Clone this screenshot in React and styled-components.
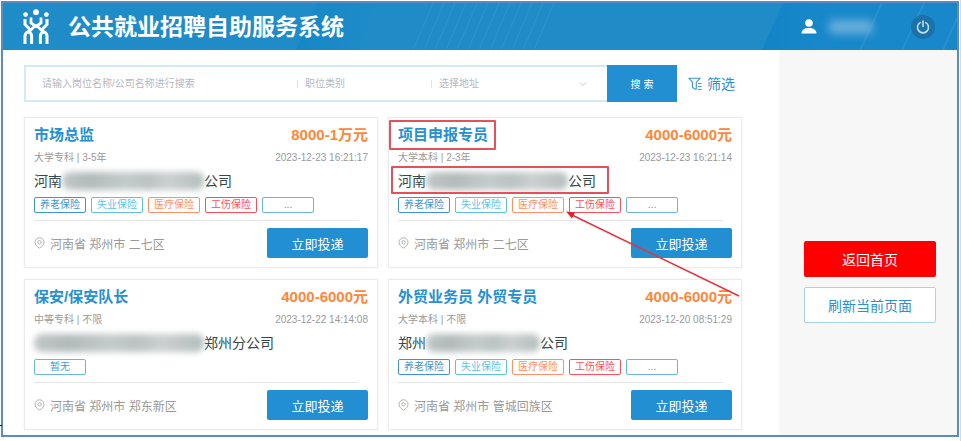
import styled, { createGlobalStyle } from 'styled-components';

const jobs = [
  {
    title: '市场总监',
    salary: '8000-1万元',
    meta: '大学专科 | 3-5年',
    date: '2023-12-23 16:21:17',
    company: ['河南', '公司'],
    hidden: 142,
    tags: ['养老保险', '失业保险', '医疗保险', '工伤保险', '...'],
    place: '河南省 郑州市 二七区',
  },
  {
    title: '项目申报专员',
    salary: '4000-6000元',
    meta: '大学本科 | 2-3年',
    date: '2023-12-23 16:21:14',
    company: ['河南', '公司'],
    hidden: 142,
    tags: ['养老保险', '失业保险', '医疗保险', '工伤保险', '...'],
    place: '河南省 郑州市 二七区',
    marked: true,
  },
  {
    title: '保安/保安队长',
    salary: '4000-6000元',
    meta: '中等专科 | 不限',
    date: '2023-12-22 14:14:08',
    company: ['', '郑州分公司'],
    hidden: 170,
    tags: ['暂无'],
    place: '河南省 郑州市 郑东新区',
  },
  {
    title: '外贸业务员 外贸专员',
    salary: '4000-6000元',
    meta: '大学本科 | 不限',
    date: '2023-12-20 08:51:29',
    company: ['郑州', '公司'],
    hidden: 114,
    tags: ['养老保险', '失业保险', '医疗保险', '工伤保险', '...'],
    place: '河南省 郑州市 管城回族区',
  },
];

const tagColors = {
  养老保险: '#3f93cf',
  失业保险: '#5fbfe6',
  医疗保险: '#ff8f66',
  工伤保险: '#ff4d5a',
};

const Logo = () => (
  <svg width="26" height="38" viewBox="0 0 26 38" fill="none" stroke="#fff" strokeWidth="3" aria-hidden="true">
    <g fill="#fff" stroke="none">
      <circle cx="2.6" cy="6.6" r="2.4" />
      <circle cx="13" cy="4.2" r="2.9" />
      <circle cx="23.4" cy="6.6" r="2.4" />
    </g>
    <path d="M2 11v5.5l6.5 6.500M24 11v5.500L17.500 23" />
    <path d="M8 9.500V15l5 3.500 5-3.500V9.500" strokeWidth="2.800" />
    <path d="M13 17l-8.500 8M13 17l8.500 8" strokeWidth="2.600" />
    <path d="M2 36v-8q0-3 3.400-4.500Q8.600 25 8.600 28v8" />
    <path d="M17.400 36v-8q0-3 3.200-4.500Q24 25 24 28v8" />
  </svg>
);

const PinIcon = () => (
  <svg width="11" height="12" viewBox="0 0 11 12" fill="none" stroke="#a8a8a8" strokeWidth="0.9" aria-hidden="true">
    <path d="M5.5 11C2.8 9.600 1 7.800 1 5.300a4.500 4.500 0 0 1 9 0c0 2.500-1.800 4.300-4.500 5.700z" />
    <circle cx="5.5" cy="5.3" r="1.7" />
  </svg>
);

const FilterIcon = () => (
  <svg width="14" height="14" viewBox="0 0 14 14" fill="none" stroke="#3d97d1" strokeWidth="1.1" aria-hidden="true">
    <path d="M7.800 12.500L4.500 10.500v-5L1 1.200h11L8.300 5.500v7" />
    <path d="M10 6.500h3.500M10 9.500h3.500M10 12.500h3.500" />
  </svg>
);

const UserIcon = () => (
  <svg width="16" height="16" viewBox="0 0 16 16" fill="#fff" aria-hidden="true">
    <circle cx="8" cy="4" r="3.800" />
    <path d="M0.500 14.500c0-3.500 3-5.500 7.500-5.500s7.500 2 7.500 5.500z" />
  </svg>
);

const PowerIcon = () => (
  <svg width="14" height="14" viewBox="0 0 14 14" fill="none" stroke="#c5dfee" strokeWidth="1.6" strokeLinecap="round" aria-hidden="true">
    <path d="M4.200 2.600a5.500 5.500 0 1 0 5.600 0M7 1v5.500" />
  </svg>
);

const HeaderArt = () => (
  <Art viewBox="0 0 954 47" preserveAspectRatio="none" aria-hidden="true">
    <defs>
      <linearGradient id="shade">
        <stop offset="0" stopColor="#0f83c4" stopOpacity="0.6" />
        <stop offset="1" stopColor="#0f83c4" stopOpacity="0" />
      </linearGradient>
    </defs>
    <path d="M293 47L314 0h60l-21 47z" fill="url(#shade)" />
    <path d="M759 47L780 0h174v47z" fill="#1486cb" opacity="0.6" />
    <path d="M759 47L780 0h50l-21 47z" fill="url(#shade)" />
    <g stroke="#fff" strokeOpacity="0.07">
      {Array.from({ length: 12 }, (_, i) => (
        <path key={i} d={`M${410 + i * 11} 47l20-47`} />
      ))}
      <path d="M857 47l22-47M899 47l22-47M940 47l14-32" strokeWidth="2" />
    </g>
  </Art>
);

const JobCard = ({ job }) => (
  <Card>
    <Line>
      <Title>
        {job.title}
        {job.marked && <TitleMark />}
      </Title>
      <Salary>{job.salary}</Salary>
    </Line>
    <MetaLine>
      <span>{job.meta}</span>
      <time>{job.date}</time>
    </MetaLine>
    <Company>
      {job.company[0]}
      <Censored $width={job.hidden} />
      {job.company[1]}
      {job.marked && <CompanyMark />}
    </Company>
    <Tags>
      {job.tags.map((tag) => (
        <Tag key={tag} $color={tagColors[tag]}>{tag}</Tag>
      ))}
    </Tags>
    <Divider />
    <Line>
      <Place>
        <PinIcon />
        {job.place}
      </Place>
      <Apply type="button">立即投递</Apply>
    </Line>
  </Card>
);

export default function App() {
  return (
    <Page>
      <GlobalStyle />
      <Frame>
        <Header>
          <HeaderArt />
          <Logo />
          <h1>公共就业招聘自助服务系统</h1>
          <UserIcon />
          <UserName />
          <Power type="button" aria-label="退出">
            <PowerIcon />
          </Power>
        </Header>
        <Body>
          <Main>
            <Toolbar>
              <Search onSubmit={(e) => e.preventDefault()}>
                <Keyword type="text" aria-label="搜索" placeholder="请输入岗位名称/公司名称进行搜索" />
                <Picker $width={134}>
                  <select aria-label="职位类别">
                    <option>职位类别</option>
                  </select>
                </Picker>
                <Picker $width={176}>
                  <select aria-label="选择地址">
                    <option>选择地址</option>
                  </select>
                  <svg width="8" height="6" viewBox="0 0 8 6" fill="none" stroke="#c3c7cd" aria-hidden="true">
                    <path d="M1 1.500l3 3 3-3" />
                  </svg>
                </Picker>
                <SearchButton type="submit">搜 索</SearchButton>
              </Search>
              <Filter type="button">
                <FilterIcon />
                筛选
              </Filter>
            </Toolbar>
            <Grid>
              {jobs.map((job) => (
                <JobCard key={job.title} job={job} />
              ))}
              <Arrow width="176" height="88" viewBox="0 0 176 88" aria-hidden="true">
                <path d="M173 85L6 4" stroke="#e0353f" strokeWidth="1.5" />
                <path d="M0 0.500l9 1-3 6z" fill="#e0202c" />
              </Arrow>
            </Grid>
          </Main>
          <Side>
            <SideButton type="button" $primary>返回首页</SideButton>
            <SideButton type="button">刷新当前页面</SideButton>
          </Side>
        </Body>
      </Frame>
    </Page>
  );
}

const GlobalStyle = createGlobalStyle`
* {
  box-sizing: border-box;
}
body {
  margin: 0;
  background: #fff;
  font-family: "Liberation Sans", "Noto Sans CJK SC", sans-serif;
}
button, input, select {
  font-family: inherit;
}
button {
  cursor: pointer;
}
`

const Page = styled.div`
  position: relative;
  padding: 1px 1px 4px;
  border-right: 1px solid #d9d9d9;

  &::after {
    content: "";
    position: absolute;
    left: 0;
    bottom: 15px;
    width: 2px;
    height: 1px;
    background: #111;
  }
`

const Frame = styled.div`
  border: 2px solid #5b8bc3;
`

const Header = styled.header`
  position: relative;
  display: flex;
  align-items: center;
  height: 47px;
  padding: 0 22px 0 20px;
  background: #1f8cc8;
  color: #fff;

  > * {
    position: relative;
    flex: none;
  }
  h1 {
    flex: 1;
    margin: 0 0 0 19px;
    font-size: 23px;
    line-height: 32px;
    font-weight: 700;
  }
`

const Art = styled.svg`
  && {
    position: absolute;
  }
  inset: 0;
  width: 100%;
  height: 100%;
`

const UserName = styled.span`
  width: 44px;
  height: 14px;
  margin: 0 38px 0 12px;
  border-radius: 4px;
  background: #66aedb;
  filter: blur(4px);
`

const Power = styled.button`
  display: flex;
  align-items: center;
  justify-content: center;
  width: 24px;
  height: 24px;
  padding: 0;
  border: 0;
  border-radius: 50%;
  background: #1a72a8;
`

const Body = styled.div`
  display: flex;
`

const Main = styled.main`
  flex: 1;
  min-width: 0;
  padding: 15px 37px 5px 21px;
`

const Toolbar = styled.div`
  display: flex;
  align-items: center;
  gap: 11px;
  padding-right: 7px;
  margin-bottom: 15px;
`

const Search = styled.form`
  flex: 1;
  display: flex;
  align-items: stretch;
  height: 37px;
  border: 2px solid #d3e9f6;
  border-right: 0;
`

const Keyword = styled.input`
  flex: 1;
  min-width: 0;
  padding: 0 16px;
  border: 0;
  outline: none;
  font-size: 10px;
  &::placeholder {
    color: #b4b8bf;
  }
`

const Picker = styled.div`
  position: relative;
  display: flex;
  align-items: center;
  width: ${({ $width }) => $width}px;

  &::before {
    content: "";
    width: 1px;
    height: 8px;
    background: #dfe2e6;
  }
  select {
    flex: 1;
    height: 100%;
    padding: 0 0 0 7px;
    border: 0;
    outline: none;
    appearance: none;
    background: transparent;
    color: #b4b8bf;
    font-size: 10px;
  }
  svg {
    position: absolute;
    right: 20px;
    pointer-events: none;
  }
`

const SearchButton = styled.button`
  width: 70px;
  margin: -2px 0;
  padding: 0;
  border: 0;
  background: #228fd3;
  color: #fff;
  font-size: 10px;
`

const Filter = styled.button`
  display: flex;
  align-items: center;
  gap: 5px;
  padding: 0;
  border: 0;
  background: none;
  color: #2e90d0;
  font-size: 14px;
  line-height: 20px;
`

const Grid = styled.div`
  position: relative;
  display: grid;
  grid-template-columns: 1fr 1fr;
  gap: 11px 10px;
`

const Card = styled.article`
  padding: 7px 9px 9px;
  border: 1px solid #ebebeb;
  box-shadow: 0 0 2px #f0f0f0;
`

const Line = styled.div`
  display: flex;
  align-items: center;
  justify-content: space-between;
`

const Title = styled.h2`
  position: relative;
  margin: 0;
  color: #2590d2;
  font-size: 15px;
  line-height: 20px;
`

const Salary = styled.strong`
  color: #ff8636;
  font-size: 15px;
  line-height: 20px;
`

const MetaLine = styled(Line)`
  margin-top: 5px;
  color: #999;
  font-size: 10px;
  line-height: 16px;
`

const Company = styled.div`
  position: relative;
  display: flex;
  align-items: center;
  width: fit-content;
  height: 20px;
  margin-top: 5px;
  color: #34474a;
  font-size: 14px;
  line-height: 20px;
`

const Censored = styled.span`
  width: ${({ $width }) => $width}px;
  height: 18px;
  border-radius: 8px;
  background: linear-gradient(90deg, #c0c8c7, #b2baba 20%, #c4cbcb 45%, #bac2c2 60%, #cbd0d0 75%, #b4bdbd);
  filter: blur(3px);
`

const Mark = styled.span`
  position: absolute;
  border: 2px solid #e5505a;
  border-radius: 1px;
`

const TitleMark = styled(Mark)`
  inset: -5px -8px -5px -9px;
`

const CompanyMark = styled(Mark)`
  inset: -5px -13px -3px -7px;
`

const Tags = styled.div`
  display: flex;
  gap: 5px;
  margin-top: 6px;
`

const Tag = styled.span`
  width: 52px;
  height: 16px;
  border: 1px solid ${({ $color }) => $color || '#6cb5e2'};
  border-radius: 2px;
  color: ${({ $color }) => $color || '#3f9ad6'};
  font-size: 10px;
  line-height: 14px;
  text-align: center;
`

const Divider = styled.hr`
  height: 1px;
  margin: 7px 9px 7px 0;
  border: 0;
  background: #e6e6e6;
`

const Place = styled.span`
  display: flex;
  align-items: center;
  gap: 5px;
  color: #999;
  font-size: 12px;
`

const Apply = styled.button`
  width: 101px;
  height: 30px;
  padding: 0;
  border: 0;
  border-radius: 2px;
  background: #228fd3;
  color: #fff;
  font-size: 13px;
`

const Arrow = styled.svg`
  position: absolute;
  right: 0;
  top: 94px;
  pointer-events: none;
`

const Side = styled.aside`
  display: flex;
  flex-direction: column;
  align-items: center;
  gap: 10px;
  width: 178px;
  padding: 191px 21px 0 25px;
  background: #f7f7f7;
`

const SideButton = styled.button`
  width: 100%;
  height: 36px;
  padding: 0;
  border: ${({ $primary }) => ($primary ? '0' : '1px solid #a8d3ee')};
  border-radius: 2px;
  background: ${({ $primary }) => ($primary ? '#f00' : '#fff')};
  color: ${({ $primary }) => ($primary ? '#fff' : '#2e90d0')};
  font-size: 14px;
`
